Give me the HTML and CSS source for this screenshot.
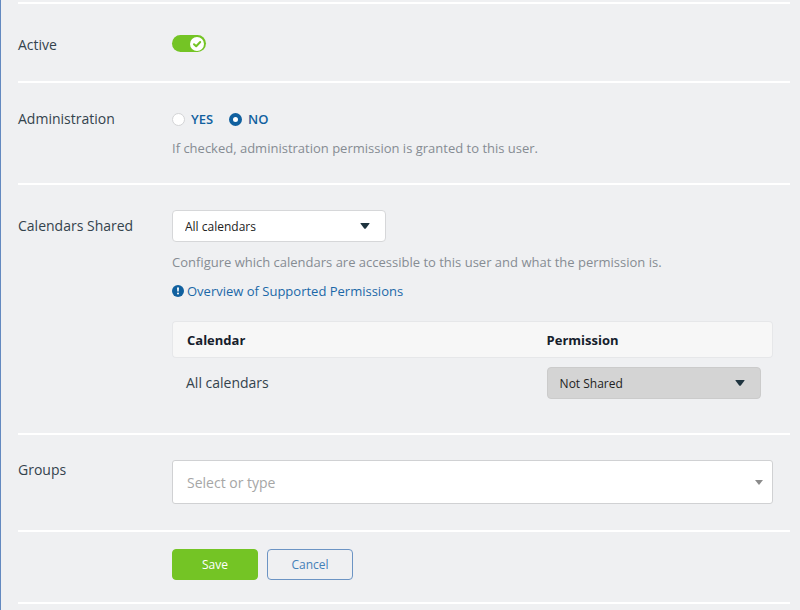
FILE: index.html
```html
<!DOCTYPE html>
<html lang="en">
<head>
    <meta charset="UTF-8">
    <meta name="viewport" content="width=device-width, initial-scale=1.0">
    <title>User settings</title>
    <link rel="stylesheet" href="styles.css">
</head>
<body>
    <form class="settings">
        <div class="row row-active">
            <label class="row-label" for="active">Active</label>
            <div class="row-content">
                <span class="switch">
                    <input type="checkbox" id="active" checked>
                    <svg class="switch-knob" viewBox="0 0 14 14" aria-hidden="true">
                        <circle cx="7" cy="7" r="7"/>
                        <path d="M4 7.2 L6.2 9.3 L10.2 5"/>
                    </svg>
                </span>
            </div>
        </div>

        <div class="row row-admin" role="radiogroup" aria-labelledby="admin-label">
            <span class="row-label" id="admin-label">Administration</span>
            <div class="row-content">
                <div class="radios">
                    <label><input type="radio" name="admin" value="yes"> YES</label>
                    <label><input type="radio" name="admin" value="no" checked> NO</label>
                </div>
                <p class="help">If checked, administration permission is granted to this user.</p>
            </div>
        </div>

        <div class="row row-calendars">
            <label class="row-label" for="calendars">Calendars Shared</label>
            <div class="row-content">
                <span class="select">
                    <select id="calendars">
                        <option>All calendars</option>
                        <option>Selected calendars</option>
                    </select>
                    <svg class="caret" viewBox="0 0 10 6" aria-hidden="true"><path d="M1 0h8q1 0 .4 .8L5.8 5.4q-.8 .8-1.6 0L.6 .8Q0 0 1 0z"/></svg>
                </span>
                <p class="help">Configure which calendars are accessible to this user and what the permission is.</p>
                <a class="overview" href="#">
                    <svg viewBox="0 0 12 12" aria-hidden="true">
                        <circle cx="6" cy="6" r="6"/>
                        <path d="M5 2.4h2l-.3 4.2H5.3z"/>
                        <circle class="dot" cx="6" cy="8.6" r="1"/>
                    </svg>
                    Overview of Supported Permissions
                </a>
                <table class="permissions">
                    <thead>
                        <tr>
                            <th>Calendar</th>
                            <th>Permission</th>
                        </tr>
                    </thead>
                    <tbody>
                        <tr>
                            <td><label for="permission">All calendars</label></td>
                            <td>
                                <span class="select select-gray">
                                    <select id="permission">
                                        <option>Not Shared</option>
                                        <option>Read-only</option>
                                    </select>
                                    <svg class="caret" viewBox="0 0 10 6" aria-hidden="true"><path d="M1 0h8q1 0 .4 .8L5.8 5.4q-.8 .8-1.6 0L.6 .8Q0 0 1 0z"/></svg>
                                </span>
                            </td>
                        </tr>
                    </tbody>
                </table>
            </div>
        </div>

        <div class="row row-groups">
            <label class="row-label" for="groups">Groups</label>
            <div class="row-content">
                <div class="combo">
                    <input type="text" id="groups" placeholder="Select or type">
                    <svg class="combo-caret" viewBox="0 0 8 5" aria-hidden="true"><path d="M0 0h8L4 5z"/></svg>
                </div>
            </div>
        </div>

        <div class="row row-buttons">
            <div class="row-content buttons">
                <button type="submit" class="btn btn-save">Save</button>
                <button type="button" class="btn btn-cancel">Cancel</button>
            </div>
        </div>
    </form>
</body>
</html>
```
FILE: styles.css
```css
* {
    box-sizing: border-box;
}

body {
    margin: 0;
    min-height: 100vh;
    padding: 2px 10px 6px 17px;
    border-left: 1px solid #6389c0;
    background-color: #eff0f2;
    color: #34434d;
    font-family: "Open Sans", sans-serif;
    font-size: 14px;
    line-height: 20px;
}

.settings {
    border-bottom: 2px solid #fff;
}

.row {
    display: grid;
    grid-template-columns: 154px 1fr;
    border-top: 2px solid #fff;
    padding-right: 17px;
}

.row-content {
    grid-column: 2;
}

/* Active */
.row-active {
    padding-top: 31px;
    padding-bottom: 26px;
}

.switch {
    position: relative;
    display: block;
    width: 34px;
    height: 17px;
}

.switch input {
    appearance: none;
    display: block;
    width: 34px;
    height: 17px;
    margin: 0;
    border-radius: 9px;
    background-color: #bbb;
    cursor: pointer;
}

.switch input:checked {
    background-color: #74c425;
}

.switch-knob {
    position: absolute;
    top: 2px;
    right: 2px;
    width: 14px;
    height: 14px;
    fill: #fff;
    pointer-events: none;
}

.switch-knob path {
    fill: none;
    stroke: #74c425;
    stroke-width: 2;
    stroke-linecap: round;
    stroke-linejoin: round;
}

/* Administration */
.row-admin {
    padding-top: 26px;
    padding-bottom: 25px;
}

.row-admin .help {
    margin-top: 9px;
}

.radios {
    display: flex;
    gap: 16px;
}

.radios label {
    display: flex;
    align-items: center;
    gap: 6px;
    color: #10609f;
    font-size: 13px;
    font-weight: 600;
    cursor: pointer;
}

.radios input {
    appearance: none;
    width: 13px;
    height: 13px;
    margin: 0;
    border: 1px solid #d3d4d6;
    border-radius: 50%;
    background-color: #fff;
}

.radios input:checked {
    border: 4px solid #10609f;
}

.help {
    margin: 10px 0 0;
    color: #868c93;
    font-size: 13px;
}

/* Calendars */
.row-calendars {
    padding-top: 25px;
    padding-bottom: 34px;
}

.row-calendars .row-label {
    padding-top: 6px;
}

.select {
    position: relative;
    display: block;
    width: 214px;
}

.select select {
    appearance: none;
    display: block;
    width: 100%;
    height: 32px;
    padding: 0 36px 0 12px;
    border: 1px solid #d6d7d9;
    border-radius: 4px;
    background-color: #fff;
    color: #222;
    font-family: inherit;
    font-size: 12px;
}

.select-gray select {
    border-color: #cbcbcb;
    background-color: #d4d4d4;
}

.caret {
    position: absolute;
    top: 13px;
    right: 16px;
    width: 10px;
    height: 6px;
    fill: #1f343f;
    pointer-events: none;
}

.overview {
    display: flex;
    align-items: center;
    gap: 3px;
    margin-top: 9px;
    color: #1b68a8;
    font-size: 13px;
    text-decoration: none;
}

.overview svg {
    width: 12px;
    height: 12px;
    fill: #10609f;
}

.overview path,
.overview .dot {
    fill: #fff;
}

.permissions {
    width: 100%;
    margin-top: 20px;
    border-collapse: separate;
    border-spacing: 0;
    table-layout: fixed;
}

.permissions th {
    height: 37px;
    padding: 0 0 0 14px;
    border: 1px solid #e6e7e9;
    border-width: 1px 0;
    background-color: #f7f7f7;
    color: #15202b;
    font-size: 13px;
    font-weight: 700;
    text-align: left;
}

.permissions th:first-child {
    width: 60%;
    border-left-width: 1px;
    border-radius: 4px 0 0 4px;
}

.permissions th:last-child {
    border-right-width: 1px;
    border-radius: 0 4px 4px 0;
}

.permissions td {
    padding: 9px 0 0 14px;
}

/* Groups */
.row-groups {
    padding-top: 25px;
    padding-bottom: 26px;
}

.combo {
    position: relative;
}

.combo input {
    display: block;
    width: 100%;
    height: 44px;
    padding: 0 36px 0 14px;
    border: 1px solid #d0d1d3;
    border-radius: 3px;
    background-color: #fff;
    color: #34434d;
    font-family: inherit;
    font-size: 14px;
}

.combo input::placeholder {
    color: #a6a6a6;
}

.combo-caret {
    position: absolute;
    top: 20px;
    right: 10px;
    width: 8px;
    height: 5px;
    fill: #8b8b8b;
}

/* Buttons */
.row-buttons {
    padding-top: 17px;
    padding-bottom: 22px;
}

.buttons {
    display: flex;
    gap: 9px;
}

.btn {
    width: 86px;
    height: 31px;
    border: 1px solid #74c425;
    border-radius: 4px;
    font-family: inherit;
    font-size: 12px;
    cursor: pointer;
}

.btn-save {
    background-color: #74c425;
    color: #fff;
    font-weight: 500;
}

.btn-cancel {
    border-color: #6c94c4;
    background-color: transparent;
    color: #4480b8;
}
```
